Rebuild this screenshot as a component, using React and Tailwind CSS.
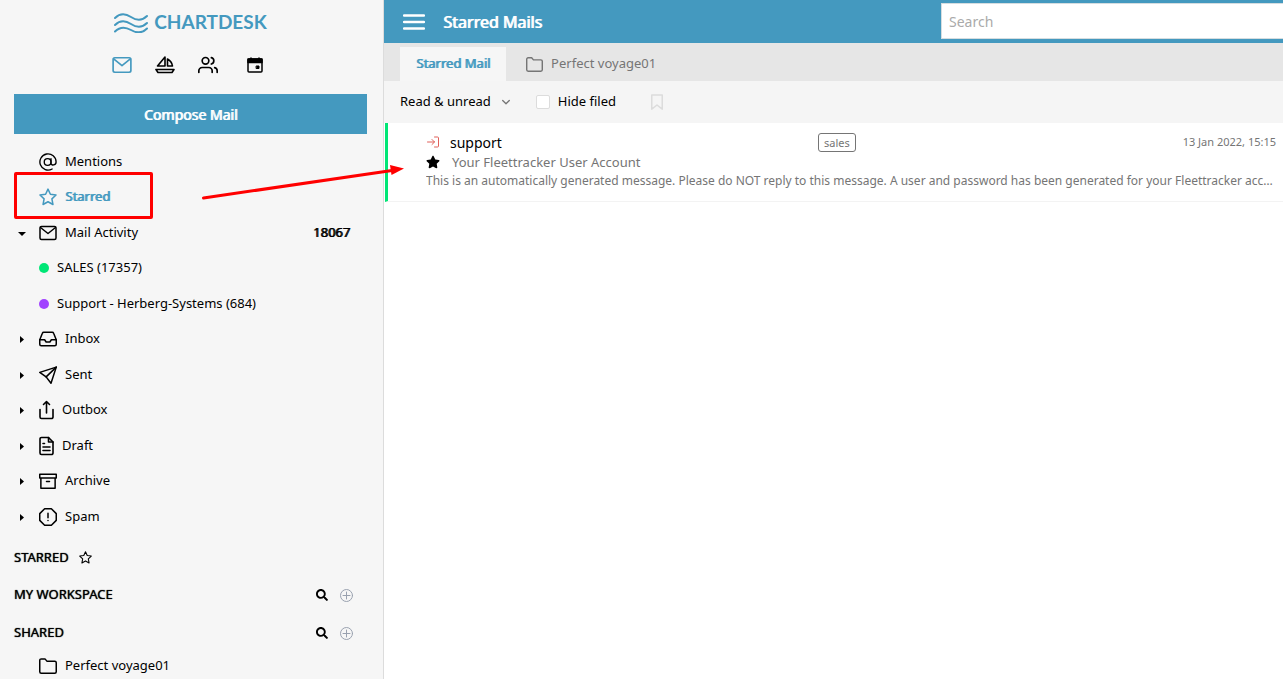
import { FaSearch, FaStar } from "react-icons/fa";

const Svg = ({ className, children, viewBox = "0 0 24 24", strokeWidth = 2 }) => (
  <svg
    className={className}
    viewBox={viewBox}
    fill="none"
    stroke="currentColor"
    strokeWidth={strokeWidth}
    strokeLinecap="round"
    strokeLinejoin="round"
    aria-hidden="true"
  >
    {children}
  </svg>
);

const MailIcon = ({ className }) => (
  <Svg className={className} viewBox="0 0 18 18" strokeWidth={1.5}>
    <rect x="1" y="2.500" width="16" height="13" rx="1.500" />
    <path d="m1.500 3.500 7.500 6 7.500-6" />
  </Svg>
);

const BoatIcon = ({ className }) => (
  <Svg className={className} viewBox="0 0 20 20" strokeWidth={1.6}>
    <path d="M10 2v9H2.500z" />
    <path d="M12.500 4v7h5c-.4-3-2.200-5.500-5-7z" />
    <path d="M1 14.500h18l-2 3H3z" />
  </Svg>
);

const UsersIcon = ({ className }) => (
  <Svg className={className}>
    <path d="M17 21v-2a4 4 0 0 0-4-4H5a4 4 0 0 0-4 4v2" />
    <circle cx="9" cy="7" r="4" />
    <path d="M23 21v-2a4 4 0 0 0-3-3.870M16 3.130a4 4 0 0 1 0 7.750" />
  </Svg>
);

const CalendarIcon = ({ className }) => (
  <Svg className={className} viewBox="0 0 16 16" strokeWidth={1.5}>
    <rect x="1" y="2" width="14" height="13" rx="1" />
    <path d="M1 2h14v3.500H1z" fill="currentColor" />
    <path d="M4 1v2M12 1v2" />
    <path d="M9.500 9h2.500v2.500H9.500z" fill="currentColor" strokeWidth="1" />
  </Svg>
);

const AtIcon = ({ className }) => (
  <Svg className={className} strokeWidth={1.8}>
    <circle cx="11.500" cy="12" r="4.500" />
    <path d="M16 7.500v6c0 3.500 6.800 3.500 6.800-1.500A10.800 10.800 0 1 0 17.500 21.300" />
  </Svg>
);

const StarIcon = ({ className }) => (
  <Svg className={className}>
    <path d="m12 1.500 3.200 6.900 7.500.9-5.500 5.200 1.400 7.500L12 18.300 5.400 22l1.400-7.500-5.500-5.200 7.500-.9z" />
  </Svg>
);

const InboxIcon = ({ className }) => (
  <Svg className={className}>
    <path d="M23 13h-6.500l-2 3h-5l-2-3H1" />
    <path d="M4.500 4.300 1 13v6a2 2 0 0 0 2 2h18a2 2 0 0 0 2-2v-6l-3.500-8.700A2 2 0 0 0 17.500 3h-11a2 2 0 0 0-2 1.300z" />
  </Svg>
);

const SentIcon = ({ className }) => (
  <Svg className={className}>
    <path d="M23 1.500 1 8.500l8.500 6L16 23z" />
    <path d="M23 1.500 9.500 14.500" />
  </Svg>
);

const OutboxIcon = ({ className }) => (
  <Svg className={className} viewBox="0 0 15 20" strokeWidth={1.6}>
    <path d="M1 9.500V17a1.500 1.500 0 0 0 1.500 1.500h10A1.500 1.500 0 0 0 14 17V9.500" />
    <path d="M7.500 13V1.500M4.500 4.500l3-3 3 3" />
  </Svg>
);

const DraftIcon = ({ className }) => (
  <Svg className={className} viewBox="0 0 15 20" strokeWidth={1.6}>
    <path d="M9.500 1.500h-7A1.500 1.500 0 0 0 1 3v14a1.500 1.500 0 0 0 1.500 1.500h10A1.500 1.500 0 0 0 14 17V6z" />
    <path d="M9.500 1.500V6H14M4 7.500h1.500M4 11h7M4 14.500h7" />
  </Svg>
);

const ArchiveIcon = ({ className }) => (
  <Svg className={className}>
    <path d="M21.500 8v13.500h-19V8M1 3h22v5H1zM10 12.500h4" />
  </Svg>
);

const SpamIcon = ({ className }) => (
  <Svg className={className}>
    <path d="M7.500 1h9L23 7.500v9L16.500 23h-9L1 16.500v-9zM12 7v6M12 16.500v.2" />
  </Svg>
);

const FolderIcon = ({ className }) => (
  <Svg className={className}>
    <path d="M23 19.500a2 2 0 0 1-2 2H3a2 2 0 0 1-2-2V4.500a2 2 0 0 1 2-2h5l2.500 3H21a2 2 0 0 1 2 2z" />
  </Svg>
);

const folders = [
  { label: "Inbox", Icon: InboxIcon },
  { label: "Sent", Icon: SentIcon },
  { label: "Outbox", Icon: OutboxIcon, narrow: true },
  { label: "Draft", Icon: DraftIcon, narrow: true },
  { label: "Archive", Icon: ArchiveIcon },
  { label: "Spam", Icon: SpamIcon },
];

const Caret = ({ label, open }) => (
  <button className="mr-[9px] flex w-4 justify-center" aria-label={label} aria-expanded={!!open}>
    <svg className="size-2" viewBox="0 0 8 8" fill="currentColor">
      {open ? <path d="M0 3h8L4 7z" /> : <path d="M2 1v7l4-3.500z" />}
    </svg>
  </button>
);

const SectionHead = ({ title }) => (
  <div className="flex h-[38px] shrink-0 items-center pr-3.5">
    <h2 className="flex-1 [text-shadow:0_0_1px]">{title}</h2>
    <button aria-label={`Search ${title}`}>
      <FaSearch className="size-3" />
    </button>
    <button className="ml-3 text-gray-400" aria-label={`Add to ${title}`}>
      <Svg className="size-[13px]" viewBox="0 0 13 13" strokeWidth={1}>
        <circle cx="6.500" cy="6.500" r="6" />
        <path d="M6.500 3v7M3 6.500h7" />
      </Svg>
    </button>
  </div>
);

const Sidebar = () => (
  <aside className="flex w-96 shrink-0 flex-col border-r border-[#dcdcdc] bg-[#f6f6f6] pr-4 pl-3.5">
    <div className="flex h-[45px] shrink-0 items-center justify-center gap-1.5 text-[#4499bf]">
      <Svg className="h-5 w-[34px]" viewBox="0 0 34 20" strokeWidth={2}>
        <path d="M1 5C6 0 11 0 17 4s11 4 16-1" />
        <path d="M1 12C6 7 11 7 17 11s11 4 16-1" />
        <path d="M1 18.500C6 13.500 11 13.500 17 17s11 3.500 16-1.500" />
      </Svg>
      <span className="font-[Lato,sans-serif] text-[19px] font-bold">CHARTDESK</span>
    </div>
    <nav className="flex h-[39px] shrink-0 items-center gap-[23px] pl-[98px]">
      <button className="text-[#4499bf]" aria-label="Mail">
        <MailIcon className="size-5" />
      </button>
      <button aria-label="Vessels">
        <BoatIcon className="size-5" />
      </button>
      <button aria-label="Contacts">
        <UsersIcon className="size-5" />
      </button>
      <button className="flex w-7 justify-center" aria-label="Calendar">
        <CalendarIcon className="size-4" />
      </button>
    </nav>
    <button className="mt-2.5 h-10 shrink-0 bg-[#4499bf] pt-0.5 text-sm text-white [text-shadow:1px_0_0]">
      Compose Mail
    </button>
    <ul className="mt-2.5 shrink-0">
      <li className="flex h-[35px] items-center pl-[25px] even:h-9">
        <a href="#mentions" className="flex items-center gap-2">
          <AtIcon className="size-[18px]" />
          Mentions
        </a>
      </li>
      <li className="relative flex h-[35px] items-center pl-[25px] even:h-9">
        <a
          href="#starred"
          className="flex items-center gap-2 text-[#4499bf] [text-shadow:1px_0_0]"
        >
          <StarIcon className="size-[18px]" />
          Starred
        </a>
        <div className="absolute -top-[7px] left-0 h-[47px] w-[139px] rounded-xs border-3 border-[#ff0000]" />
      </li>
      <li className="flex h-[35px] items-center even:h-9">
        <Caret label="Mail Activity" open />
        <a href="#activity" className="flex flex-1 items-center gap-2">
          <MailIcon className="size-[18px]" />
          Mail Activity
        </a>
        <span className="pr-[17px] [text-shadow:1px_0_0]">18067</span>
      </li>
      <li className="flex h-[35px] items-center pl-[25px] even:h-9">
        <a href="#sales" className="flex items-center gap-2">
          <span className="size-2.5 rounded-full bg-[#00e676]" />
          SALES (17357)
        </a>
      </li>
      <li className="flex h-[35px] items-center pl-[25px] even:h-9">
        <a href="#support" className="flex items-center gap-2">
          <span className="size-2.5 rounded-full bg-[#a142ff]" />
          Support - Herberg-Systems (684)
        </a>
      </li>
      {folders.map(({ label, Icon, narrow }) => (
        <li key={label} className="flex h-[35px] items-center even:h-9">
          <Caret label={label} />
          <a href={`#${label.toLowerCase()}`} className="flex items-center gap-2">
            <Icon className={narrow ? "h-5 w-[15px]" : "size-[18px]"} />
            {label}
          </a>
        </li>
      ))}
    </ul>
    <div className="mt-[5px] flex h-[37px] shrink-0 items-center gap-2.5">
      <h2 className="[text-shadow:0_0_1px]">STARRED</h2>
      <StarIcon className="size-[13px]" />
    </div>
    <SectionHead title="MY WORKSPACE" />
    <SectionHead title="SHARED" />
    <a href="#voyage" className="flex h-7 shrink-0 items-center gap-2 pl-[25px]">
      <FolderIcon className="size-[18px]" />
      Perfect voyage01
    </a>
  </aside>
);

const MailRow = () => (
  <article className="ml-px border-b border-l-3 border-b-[#f3f3f3] border-l-[#00e676] pt-[9px] pr-[7px] pb-3 pl-[38px] text-[#757575]">
    <div className="flex h-5 items-center">
      <Svg className="mx-px size-3 text-[#e0605a]">
        <path d="M15 2h6a2 2 0 0 1 2 2v16a2 2 0 0 1-2 2h-6M10 17l5-5-5-5M15 12H1" />
      </Svg>
      <h3 className="ml-2.5 w-[368px] pt-0.5 text-sm text-black">support</h3>
      <span className="rounded-[3px] border border-[#757575] px-[5px] text-[11px] leading-[17px]">
        sales
      </span>
      <time className="ml-auto text-[11px]">13 Jan 2022, 15:15</time>
    </div>
    <div className="flex h-5 items-center gap-3">
      <FaStar className="size-3.5 text-black" />
      <span className="pt-0.5">Your Fleettracker User Account</span>
    </div>
    <p className="truncate text-xs leading-[17px]">
      This is an automatically generated message. Please do NOT reply to this message. A user and
      password has been generated for your Fleettracker account.
    </p>
  </article>
);

const App = () => (
  <div className="relative flex h-screen overflow-hidden bg-white font-['Noto_Sans',sans-serif] text-[13px] text-black">
    <Sidebar />
    <main className="min-w-0 flex-1">
      <header className="flex h-[43px] items-center bg-[#4499bf] pl-[19px] text-white">
        <button aria-label="Menu">
          <Svg className="h-4 w-[22px]" viewBox="0 0 22 16" strokeWidth={2.5}>
            <path d="M1 1.500h20M1 8h20M1 14.500h20" />
          </Svg>
        </button>
        <h1 className="ml-[18px] flex-1 text-base [text-shadow:1px_0_0]">Starred Mails</h1>
        <input
          type="search"
          placeholder="Search"
          aria-label="Search"
          className="mb-px h-9 w-[342px] border border-r-0 border-[#d5dde0] bg-white px-[7px] text-sm text-black placeholder:text-[#aaaaaa]"
        />
      </header>
      <div className="flex h-[38px] items-end bg-[#e6e6e6] pl-4">
        <button className="h-[34px] bg-[#f6f6f6] px-4 text-[#4499bf] [text-shadow:1px_0_0]">
          Starred Mail
        </button>
        <button className="flex h-[34px] items-center gap-2 px-5 text-[#757575]">
          <FolderIcon className="size-[17px]" />
          Perfect voyage01
        </button>
      </div>
      <div className="flex h-[42px] items-center bg-[#f5f5f5] pl-4">
        <button className="flex items-center gap-[11px]">
          Read &amp; unread
          <Svg className="size-2 text-[#757575]" viewBox="0 0 8 8" strokeWidth={1.3}>
            <path d="m.7 2.500 3.300 3.300 3.300-3.300" />
          </Svg>
        </button>
        <label className="ml-[26px] flex items-center gap-2">
          <input
            type="checkbox"
            className="size-3.5 appearance-none rounded-xs border border-[#dcdcdc] bg-white"
          />
          Hide filed
        </label>
        <button className="ml-8 text-[#dcdcdc]" aria-label="Bookmark">
          <Svg className="size-[18px]">
            <path d="M19 21.500 12 16l-7 5.500V2.500h14z" />
          </Svg>
        </button>
      </div>
      <MailRow />
    </main>
    {/* pointer from the Starred folder to the mail */}
    <svg
      className="pointer-events-none absolute top-[160px] left-[200px] h-[42px] w-[206px]"
      viewBox="0 0 206 42"
      aria-hidden="true"
    >
      <path d="M3.500 38 192 10.500" stroke="#ff0000" strokeWidth="3" strokeLinecap="round" />
      <path d="m204 8.500-14-3.500 1.500 10z" fill="#ff0000" />
    </svg>
  </div>
);

export default App;
